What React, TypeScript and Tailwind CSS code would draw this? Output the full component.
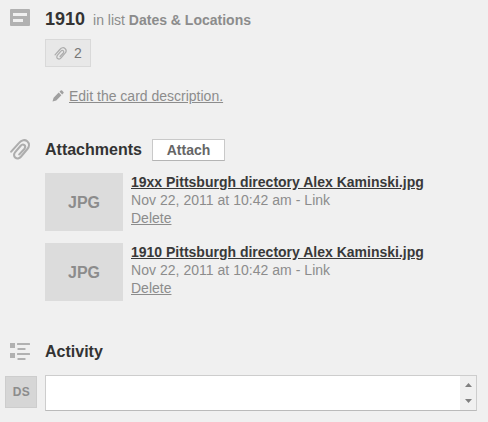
import React from "react";

interface Attachment {
  id: number;
  name: string;
  date: string;
  ext: string;
}

const attachments: Attachment[] = [
  { id: 1, name: "19xx Pittsburgh directory Alex Kaminski.jpg", date: "Nov 22, 2011 at 10:42 am", ext: "JPG" },
  { id: 2, name: "1910 Pittsburgh directory Alex Kaminski.jpg", date: "Nov 22, 2011 at 10:42 am", ext: "JPG" },
];

const CardIcon: React.FC = () => (
  <svg width="20" height="17" viewBox="0 0 20 17" className="block">
    <path
      fillRule="evenodd"
      fill="#b1b1b1"
      d="M1 0h18a1 1 0 0 1 1 1v15a1 1 0 0 1-1 1H1a1 1 0 0 1-1-1V1a1 1 0 0 1 1-1zM3 4v3h14V4zM3 10v3h10v-3z"
    />
  </svg>
);

const ClipIcon: React.FC<{ width: number; height: number; stroke?: number }> = ({ width, height, stroke = 2.1 }) => (
  <svg width={width} height={height} viewBox="0 0 20 21" fill="none" className="block">
    <path
      d="M1.200 12.600L9.300 3.600C11.500 1 14.900.3 17.200 2.300c2.300 2 2.300 5.200.2 7.700l-6.500 7.700c-1.500 1.800-3.900 2.300-5.600.9-1.700-1.400-1.600-3.800-.1-5.500l5.500-6.400c1.100-1.200 2.600-1.500 3.700-.6 1.100.9 1.100 2.400.1 3.600L9.300 15.400"
      stroke="#adadad"
      strokeWidth={stroke}
      strokeLinecap="round"
      strokeLinejoin="round"
    />
  </svg>
);

const PencilIcon: React.FC = () => (
  <svg width="12" height="12" viewBox="0 0 12 12" fill="#a0a0a0" className="block">
    <path d="M0.500 11.500L1.600 7.700 6.700 2.600 9.400 5.300 4.300 10.400zM7.500 1.800L8.700.6a1 1 0 0 1 1.400 0l1.300 1.300a1 1 0 0 1 0 1.400L10.200 4.500z" />
  </svg>
);

const ActivityIcon: React.FC = () => (
  <svg width="20" height="17" viewBox="0 0 20 17" fill="#b1b1b1" className="block">
    <rect x="0" y="0" width="5" height="5" />
    <rect x="7" y="0" width="13" height="2" rx="0.5" />
    <rect x="7.500" y="5" width="8" height="2" rx="0.5" />
    <rect x="0" y="10" width="5" height="5" />
    <rect x="7" y="10" width="13" height="2" rx="0.5" />
    <rect x="7.500" y="15" width="8" height="2" rx="0.5" />
  </svg>
);

const AttachmentRow: React.FC<{ item: Attachment }> = ({ item }) => (
  <div className="flex gap-2">
    <div className="flex h-[58px] w-[78px] items-center justify-center bg-[#dcdcdc] pt-0.5 text-base font-bold text-[#8c8c8c]">
      {item.ext}
    </div>
    <div className="leading-[18px] whitespace-nowrap">
      <a className="block font-bold text-[#393939] underline">{item.name}</a>
      <p className="tracking-[0.03px]">{item.date} - Link</p>
      <a className="block underline">Delete</a>
    </div>
  </div>
);

const App: React.FC = () => {
  return (
    <div className="h-[422px] w-[488px] overflow-hidden bg-[#f0f0f0] pt-[9px] font-['Liberation_Sans',Arial,sans-serif] text-sm text-[#8c8c8c]">
      <header className="flex h-[30px] pl-[10px]">
        <div className="w-[35px]">
          <CardIcon />
        </div>
        <div className="flex h-5 items-baseline gap-2 leading-5">
          <h1 className="text-lg leading-5 font-bold text-[#333]">1910</h1>
          <p>
            in list <span className="font-bold">Dates &amp; Locations</span>
          </p>
        </div>
      </header>

      <div className="ml-[45px] flex h-7 w-[46px] items-center gap-[7px] border border-[#d9d9d9] bg-[#e8e8e8] pl-2">
        <ClipIcon width={13} height={13} stroke={2} />
        <span className="text-[#777]">2</span>
      </div>

      <div className="mt-5 ml-[52px] flex h-[18px] items-center gap-[5px]">
        <PencilIcon />
        <a className="leading-[18px] underline">Edit the card description.</a>
      </div>

      <section className="mt-[34px]">
        <div className="flex h-[22px] pl-[10px]">
          <div className="w-[35px]">
            <ClipIcon width={20} height={21} />
          </div>
          <h2 className="text-base leading-[21px] font-bold text-[#333]">Attachments</h2>
          <button className="ml-auto mr-[263px] h-[22px] w-[73px] border border-[#c9c9c9] border-b-[#b4b4b4] bg-white leading-[20px] font-bold text-[#666]">
            Attach
          </button>
        </div>
        <div className="mt-3 ml-[45px] flex flex-col gap-3">
          {attachments.map((a) => (
            <AttachmentRow key={a.id} item={a} />
          ))}
        </div>
      </section>

      <section className="mt-[41px]">
        <div className="flex h-[33px] pl-[10px]">
          <div className="w-[35px] pt-px">
            <ActivityIcon />
          </div>
          <h2 className="text-base leading-[19px] font-bold text-[#333]">Activity</h2>
        </div>
        <div className="flex gap-2 pl-[5px]">
          <div className="mt-px flex h-8 w-8 items-center justify-center border border-[#cdcdcd] bg-[#d6d6d6] pl-px text-xs font-bold tracking-[0.5px] text-[#8c8c8c]">
            DS
          </div>
          <div className="flex h-9 w-[432px] border border-[#cdcdcd] border-b-[#bababa] bg-white">
            <div className="ml-auto flex w-4 flex-col items-center justify-between bg-[#f0f0f0] py-[7px]">
              <svg width="7" height="4" viewBox="0 0 7 4" fill="#808080">
                <path d="M0 4L3.500 0 7 4z" />
              </svg>
              <svg width="7" height="4" viewBox="0 0 7 4" fill="#808080">
                <path d="M0 0L3.500 4 7 0z" />
              </svg>
            </div>
          </div>
        </div>
      </section>
    </div>
  );
};

export default App;
